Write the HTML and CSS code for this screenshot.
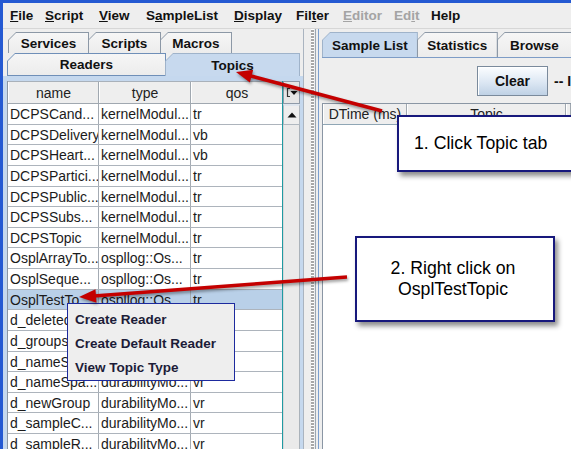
FILE: index.html
```html
<!DOCTYPE html>
<html>
<head>
<meta charset="utf-8">
<link rel="stylesheet" href="styles.css">
</head>
<body>
<div class="window">
  <div class="menubar">
    <span><u>F</u>ile</span>
    <span><u>S</u>cript</span>
    <span><u>V</u>iew</span>
    <span>S<u>a</u>mpleList</span>
    <span><u>D</u>isplay</span>
    <span>Fil<u>t</u>er</span>
    <span class="dis"><u>E</u>ditor</span>
    <span class="dis">Ed<u>i</u>t</span>
    <span>Help</span>
  </div>
  <div class="main">
    <div class="left">
      <div class="tabrow r1">
        <div class="tab w-services"><span class="tab-in">Services</span></div>
        <div class="tab w-scripts"><span class="tab-in">Scripts</span></div>
        <div class="tab w-macros"><span class="tab-in">Macros</span></div>
      </div>
      <div class="tabrow r2">
        <div class="tab w-readers"><span class="tab-in">Readers</span></div>
        <div class="tab sel w-topics"><span class="tab-in">Topics</span></div>
      </div>
      <div class="lcontent">
        <div class="table">
          <div class="thead">
            <div class="th">name</div><div class="th">type</div><div class="th">qos</div>
          </div>
          <div class="tbody">
            <div class="row"><div class="td">DCPSCand...</div><div class="td">kernelModul...</div><div class="td">tr</div></div>
            <div class="row"><div class="td">DCPSDelivery</div><div class="td">kernelModul...</div><div class="td">vb</div></div>
            <div class="row"><div class="td">DCPSHeart...</div><div class="td">kernelModul...</div><div class="td">vb</div></div>
            <div class="row"><div class="td">DCPSPartici...</div><div class="td">kernelModul...</div><div class="td">tr</div></div>
            <div class="row"><div class="td">DCPSPublic...</div><div class="td">kernelModul...</div><div class="td">tr</div></div>
            <div class="row"><div class="td">DCPSSubs...</div><div class="td">kernelModul...</div><div class="td">tr</div></div>
            <div class="row"><div class="td">DCPSTopic</div><div class="td">kernelModul...</div><div class="td">tr</div></div>
            <div class="row"><div class="td">OsplArrayTo...</div><div class="td">ospllog::Os...</div><div class="td">tr</div></div>
            <div class="row"><div class="td">OsplSeque...</div><div class="td">ospllog::Os...</div><div class="td">tr</div></div>
            <div class="row sel"><div class="td">OsplTestTo...</div><div class="td">ospllog::Os...</div><div class="td">tr</div></div>
            <div class="row"><div class="td">d_deletedI...</div><div class="td">durabilityMo...</div><div class="td">vr</div></div>
            <div class="row"><div class="td">d_groupsR...</div><div class="td">durabilityMo...</div><div class="td">vr</div></div>
            <div class="row"><div class="td">d_nameSp...</div><div class="td">durabilityMo...</div><div class="td">vr</div></div>
            <div class="row"><div class="td">d_nameSpa...</div><div class="td">durabilityMo...</div><div class="td">vr</div></div>
            <div class="row"><div class="td">d_newGroup</div><div class="td">durabilityMo...</div><div class="td">vr</div></div>
            <div class="row"><div class="td">d_sampleC...</div><div class="td">durabilityMo...</div><div class="td">vr</div></div>
            <div class="row"><div class="td">d_sampleR...</div><div class="td">durabilityMo...</div><div class="td">vr</div></div>
          </div>
        </div>
        <div class="vscroll">
          <div class="corner">
            <svg width="12" height="11" viewBox="0 0 12 11"><path d="M4 1.5H1.5V9.5H4" fill="none" stroke="#333" stroke-width="1.2"/><path d="M4.5 4H11.5L8 8Z" fill="#111"/></svg>
          </div>
          <div class="upbtn">
            <svg width="10" height="6" viewBox="0 0 10 6"><path d="M0.5 5.5L5 0.5L9.5 5.5Z" fill="#111"/></svg>
          </div>
          <div class="track"></div>
        </div>
      </div>
    </div>
    <div class="divider"><span class="grip"></span></div>
    <div class="right">
      <div class="rwrap">
        <div class="tabrow rtabs">
          <div class="tab sel w-sample"><span class="tab-in">Sample List</span></div>
          <div class="tab w-stats"><span class="tab-in">Statistics</span></div>
          <div class="tab w-browse"><span class="tab-in">Browse</span></div>
        </div>
        <div class="rcontent">
          <div class="toolbar">
            <div class="btn">Clear</div>
            <span class="more">-- I</span>
          </div>
          <div class="rtable">
            <div class="rhead">
              <div class="th">DTime (ms)</div><div class="th">Topic</div><div class="th"></div>
            </div>
          </div>
        </div>
      </div>
    </div>
  </div>
</div>

<div class="popup">
  <div class="item">Create Reader</div>
  <div class="item">Create Default Reader</div>
  <div class="item">View Topic Type</div>
</div>

<div class="callout c1">1. Click Topic tab</div>
<div class="callout c2">2. Right click on<br>OsplTestTopic</div>

<svg class="arrows" width="571" height="449" viewBox="0 0 571 449">
  <g class="arrow">
    <line x1="250" y1="75.7" x2="382" y2="111" stroke="#c40000" stroke-width="3.6"/>
    <polygon points="236,72 249.9,82.4 253.2,69.8" fill="#c40000"/>
    <line x1="94" y1="296" x2="347" y2="277" stroke="#c40000" stroke-width="3.6"/>
    <polygon points="79,297 96.5,302.8 95.5,289.2" fill="#c40000"/>
  </g>
</svg>
</body>
</html>
```

FILE: styles.css
```css
body {
  margin: 0;
  width: 571px;
  height: 449px;
  position: relative;
  overflow: hidden;
  font-family: "Liberation Sans", Arial, sans-serif;
  background: #eeeeee;
}

.window {
  width: 571px;
  height: 449px;
  box-sizing: border-box;
  border-left: 3px solid #2459d2;
  border-top: 3px solid #2459d2;
  background: #eeeeee;
  display: flex;
  flex-direction: column;
  overflow: hidden;
}

/* menu */
.menubar {
  height: 25px;
  flex: none;
  display: flex;
  align-items: center;
  padding-left: 7px;
  font-weight: bold;
  font-size: 13.5px;
  color: #111;
  border-bottom: 1px solid #d6d6d6;
  background: #eeeeee;
}
.menubar span { flex: none; white-space: nowrap; }
.menubar span:nth-child(1) { width: 35px; }
.menubar span:nth-child(2) { width: 54px; }
.menubar span:nth-child(3) { width: 47px; }
.menubar span:nth-child(4) { width: 88px; }
.menubar span:nth-child(5) { width: 62px; }
.menubar span:nth-child(6) { width: 47px; }
.menubar span:nth-child(7) { width: 51px; }
.menubar span:nth-child(8) { width: 37px; }
.menubar .dis { color: #a4a4a4; }

.main {
  flex: 1;
  display: flex;
  min-height: 0;
}

/* tabs */
.tabrow { display: flex; flex: none; }
.tab {
  box-sizing: border-box;
  display: flex;
  padding: 1px 1px 0 1px;
  background: #8c98a6;
  clip-path: polygon(0 8px, 8px 0, 100% 0, 100% 100%, 0 100%);
  margin-right: -1px;
}
.tab-in {
  flex: 1;
  display: flex;
  align-items: center;
  justify-content: center;
  background: linear-gradient(#f6f6f6, #ececec);
  clip-path: polygon(0 7px, 7px 0, 100% 0, 100% 100%, 0 100%);
  font-weight: bold;
  font-size: 13.5px;
  color: #111;
  white-space: nowrap;
}
.tab.sel { background: #9fb3ca; }
.tab.sel .tab-in { background: #c7d9ee; }

.r1 { margin-top: 3px; padding-left: 5px; height: 21px; }
.r2 { padding-left: 4px; height: 23px; }
.r2 .tab:not(.sel) { padding-bottom: 1px; background: #6f8fb8; }
.w-services { width: 81px; }
.w-scripts { width: 73px; }
.w-macros { width: 72px; }
.w-readers { width: 159px; }
.w-topics { width: 135px; }

/* left content */
.left {
  width: 300px;
  flex: none;
  display: flex;
  flex-direction: column;
}
.lcontent {
  flex: 1;
  min-height: 0;
  background: #c5d8ee;
  padding: 5px 3px 0 4px;
  display: flex;
  overflow: hidden;
}
.table {
  width: 276px;
  flex: none;
  box-sizing: border-box;
  background: #fff;
  border-left: 1px solid #8a96a4;
  border-right: 1px solid #1f9aa2;
  display: flex;
  flex-direction: column;
  overflow: hidden;
}
.thead {
  height: 23px;
  flex: none;
  box-sizing: border-box;
  display: grid;
  grid-template-columns: 91px 92px 1fr;
  background: #eeeeee;
  border-top: 1px solid #a9b1ba;
  border-bottom: 1px solid #a0a8b0;
}
.tbody { flex: none; }
.th {
  border-right: 1px solid #a0a8b0;
  border-left: 1px solid #fff;
  display: flex;
  align-items: center;
  justify-content: center;
  font-size: 14px;
  color: #222;
}
.thead .th:last-child { border-right: none; }
.row {
  height: 20.625px;
  box-sizing: border-box;
  display: grid;
  grid-template-columns: 91px 92px 1fr;
  border-bottom: 1px solid #adb4bc;
}
.row.sel { background: #b9d0e8; }
.td {
  border-right: 1px solid #a4abb3;
  padding-left: 2px;
  font-size: 14px;
  line-height: 21px;
  color: #1b1b1b;
  white-space: nowrap;
  overflow: hidden;
}
.row .td:last-child { border-right: none; }

.vscroll {
  width: 17px;
  flex: none;
  display: flex;
  flex-direction: column;
}
.corner {
  height: 23px;
  flex: none;
  box-sizing: border-box;
  background: #e6e6e6;
  border: 1px solid #8e9aa8;
  display: flex;
  align-items: center;
  justify-content: center;
}
.upbtn {
  height: 21px;
  flex: none;
  box-sizing: border-box;
  background: #eeeeee;
  border: 1px solid #b0b8c0;
  border-top: 2px solid #dfe6ee;
  display: flex;
  align-items: center;
  justify-content: center;
}
.track {
  flex: 1;
  background: #eaeaea;
  border-left: 1px solid #d8d8d8;
  border-right: 1px solid #aab2ba;
}

/* divider */
.divider {
  width: 12px;
  flex: none;
  box-sizing: border-box;
  border-left: 1px solid #aab4c0;
  padding-left: 7px;
  display: flex;
}
.grip {
  width: 3px;
  background-image: linear-gradient(#ffffff 50%, #a8a8a8 50%);
  background-size: 3px 3px;
}

/* right */
.right {
  flex: 1;
  min-width: 0;
  overflow: hidden;
  border-left: 1px solid #9aa6b2;
}
.rwrap {
  height: 100%;
  margin-left: 2px;
  border-left: 1px solid #7b9fcf;
  padding-left: 3px;
  display: flex;
  flex-direction: column;
}
.rtabs { margin-top: 3px; height: 25px; }
.w-sample { width: 102px; }
.w-stats { width: 86px; }
.w-browse { width: 80px; }
.rcontent {
  flex: 1;
  min-height: 0;
  display: flex;
  flex-direction: column;
  background: #eeeeee;
  border-top: 1px solid #7d9cc6;
}
.toolbar {
  height: 45px;
  flex: none;
  display: flex;
  align-items: center;
  padding-left: 155px;
  white-space: nowrap;
}
.btn {
  width: 71px;
  height: 30px;
  flex: none;
  box-sizing: border-box;
  border: 1px solid #7a8a9c;
  box-shadow: inset 1px 1px 0 #fff;
  background: linear-gradient(#fbfdff, #dce7f3 55%, #bfd1e5);
  display: flex;
  align-items: center;
  justify-content: center;
  font-weight: bold;
  font-size: 14px;
  color: #111;
}
.more {
  margin-left: 6px;
  font-weight: bold;
  font-size: 14px;
  color: #111;
}
.rtable {
  flex: 1;
  background: #fff;
  border-left: 1px solid #8a96a4;
  border-top: 1px solid #8a96a4;
}
.rhead {
  height: 21px;
  box-sizing: border-box;
  display: grid;
  grid-template-columns: 84px 159px 1fr;
  background: #eeeeee;
  border-bottom: 1px solid #8fa6b5;
}

/* popup */
.popup {
  position: absolute;
  left: 67px;
  top: 303px;
  width: 168px;
  height: 78px;
  box-sizing: border-box;
  background: #eeeeee;
  border: 1px solid #1d2a9e;
  padding-top: 3px;
}
.item {
  height: 24px;
  display: flex;
  align-items: center;
  padding-left: 7px;
  font-weight: bold;
  font-size: 13.5px;
  color: #1c1c38;
  white-space: nowrap;
}

/* callouts */
.callout {
  position: absolute;
  box-sizing: border-box;
  background: #fff;
  border: 2px solid #17187c;
  box-shadow: 3px 4px 5px rgba(0, 0, 0, 0.45);
  font-size: 17.7px;
  color: #000;
}
.c1 {
  left: 397px;
  top: 115px;
  width: 190px;
  height: 57px;
  display: flex;
  align-items: center;
  padding-left: 15px;
  white-space: nowrap;
}
.c2 {
  left: 355px;
  top: 236px;
  width: 200px;
  height: 86px;
  display: flex;
  align-items: center;
  justify-content: center;
  text-align: center;
  line-height: 21px;
  padding-right: 4px;
}

.arrows {
  position: absolute;
  left: 0;
  top: 0;
  pointer-events: none;
}
.arrow { filter: drop-shadow(1px 2px 1.5px rgba(0, 0, 0, 0.4)); }
```
